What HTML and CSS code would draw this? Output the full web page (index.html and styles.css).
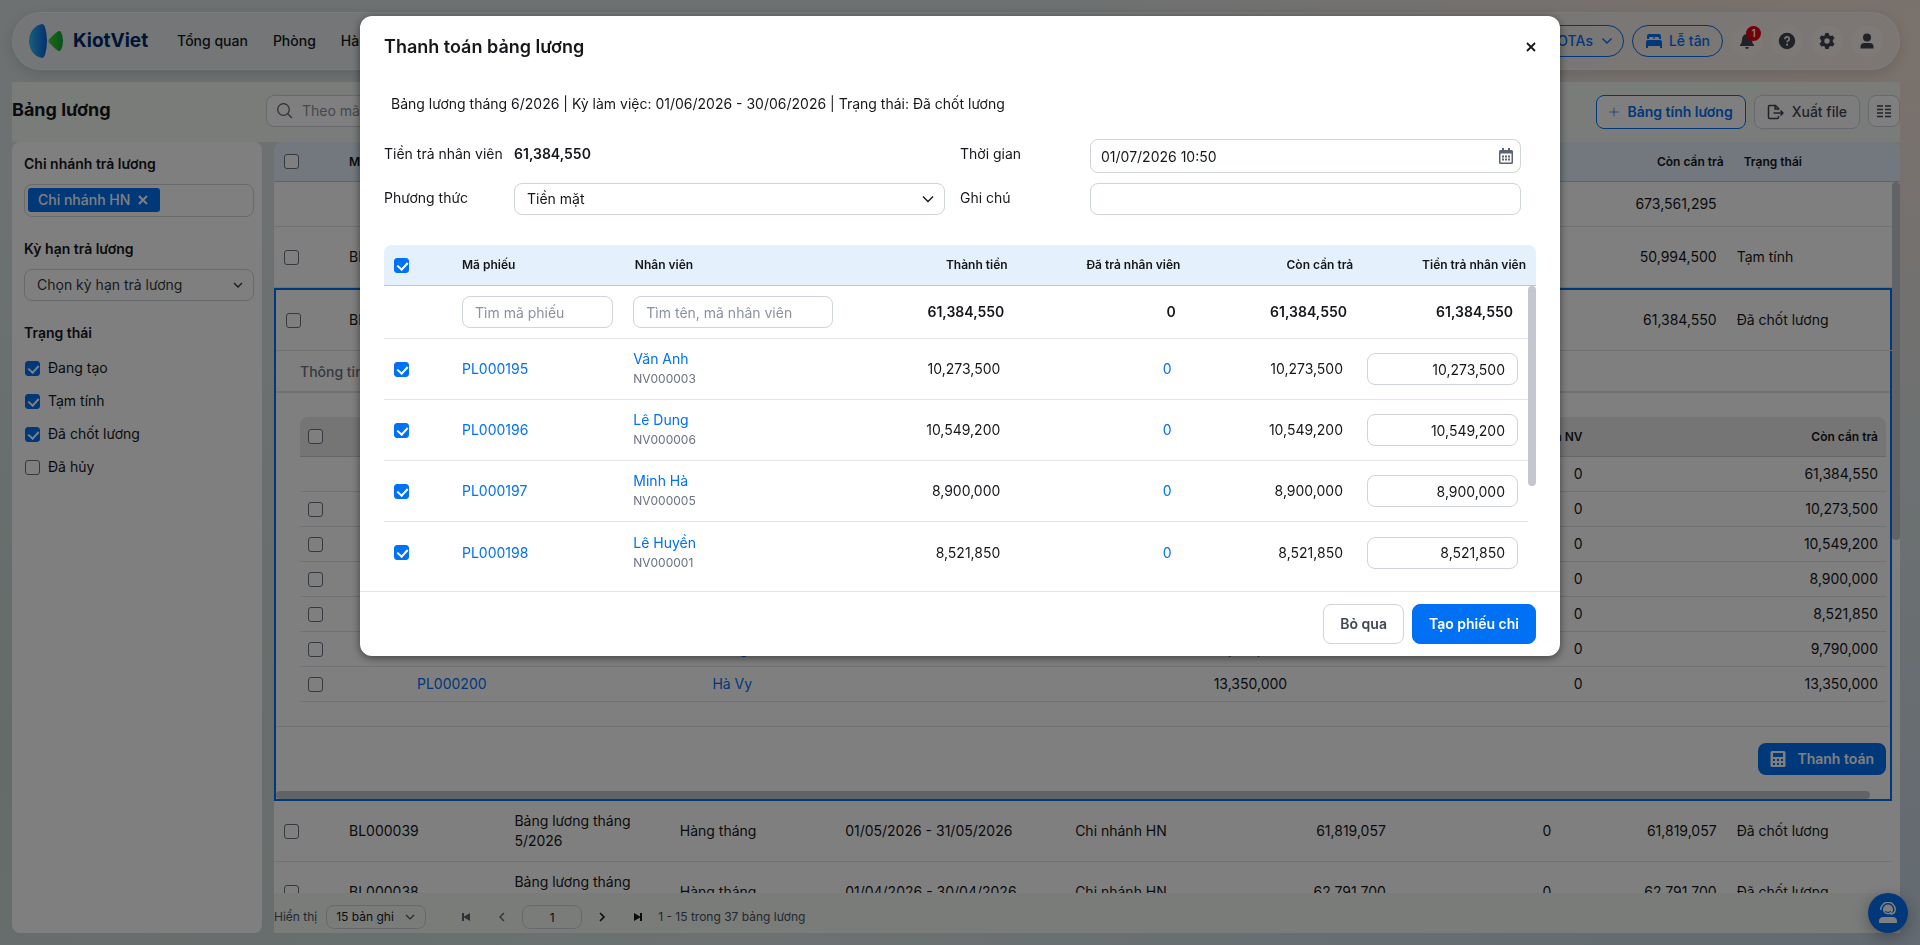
FILE: index.html
```html
<!DOCTYPE html>
<html lang="vi">
<head>
    <meta charset="UTF-8">
    <meta name="viewport" content="width=device-width, initial-scale=1.0">
    <title>Bảng lương - KiotViet</title>
    <link rel="stylesheet" href="styles.css">
</head>
<body>
    <header class="topbar">
        <a href="#" class="logo">
            <svg width="35" height="34" viewBox="0 0 35 34">
                <defs>
                    <linearGradient id="lg-blue" x1="0" x2="1"><stop offset="0" stop-color="#2ec0f5"/><stop offset="1" stop-color="#0a5fe0"/></linearGradient>
                    <linearGradient id="lg-green" x1="0" x2="1"><stop offset="0" stop-color="#48d02a"/><stop offset="1" stop-color="#0aa53a"/></linearGradient>
                </defs>
                <path d="M13 0C6 1 0 8 0 17s6 16 13 17q2 0 3-3 2-7 2-14T16 3q-1-3-3-3z" fill="url(#lg-blue)"/>
                <path d="M20 15.500Q26 9 29 7.300q2-1 3 0.700 2 4 2 9t-2 9q-1 1.700-3 0.700Q26 25 20 18.500q-1.300-1.500 0-3z" fill="url(#lg-green)"/>
            </svg>
            <span>KiotViet</span>
        </a>
        <nav class="main-nav">
            <a href="#">Tổng quan</a>
            <a href="#">Phòng</a>
            <a href="#">Hàng</a>
        </nav>
        <div class="top-actions">
            <button class="pill">OTAs
                <svg width="12" height="12" viewBox="0 0 12 12"><path d="M1.500 3.500L6 8l4.500-4.500" fill="none" stroke="currentColor" stroke-width="1.400"/></svg>
            </button>
            <button class="pill">
                <svg width="18" height="16" viewBox="0 0 18 16"><path d="M2 6V3q0-2 2-2h10q2 0 2 2v3h-2V5q0-1-1-1h-2.500q-1 0-1 1v1h-1V5q0-1-1-1H5Q4 4 4 5v1zM1 15V9q0-2 2-2h12q2 0 2 2v6h-2v-2H3v2z" fill="currentColor"/></svg>
                Lễ tân
            </button>
            <button class="round" aria-label="Thông báo">
                <svg width="18" height="18" viewBox="0 0 18 18"><path d="M9 2q5 0.500 5 6 0 3 2 5v1H2v-1q2-2 2-5 0-5.500 5-6zM7 15h4q-0.500 2-2 2t-2-2z" fill="currentColor"/></svg>
                <span class="badge">1</span>
            </button>
            <button class="round" aria-label="Trợ giúp">
                <svg width="18" height="18" viewBox="0 0 18 18"><circle cx="9" cy="9" r="8.200" fill="currentColor"/><path d="M6.800 7.200Q7 4.900 9.100 4.900t2.200 2q0 1.100-1.200 1.800-1 0.600-1 1.600" fill="none" stroke="#f4efec" stroke-width="1.600"/><circle cx="9.100" cy="12.700" r="1.100" fill="#f4efec"/></svg>
            </button>
            <button class="round" aria-label="Thiết lập">
                <svg width="18" height="18" viewBox="0 0 18 18"><path d="M7.300 1h3.400l0.500 2.300 1.400 0.800 2.200-0.700 1.700 2.900-1.700 1.600v2.200l1.700 1.600-1.700 2.900-2.200-0.700-1.400 0.800-0.500 2.300H7.300l-0.500-2.300-1.400-0.800-2.200 0.700-1.700-2.900 1.700-1.600V7.900L1.500 6.300l1.700-2.900 2.200 0.700 1.400-0.800zM9 6.300a2.700 2.700 0 100 5.400 2.700 2.700 0 000-5.400z" fill="currentColor" fill-rule="evenodd"/></svg>
            </button>
            <button class="round" aria-label="Tài khoản">
                <svg width="18" height="18" viewBox="0 0 18 18"><circle cx="9" cy="5.500" r="4" fill="currentColor"/><path d="M2.500 16.500v-1.500q0-4 4-4h5q4 0 4 4v1.500z" fill="currentColor"/></svg>
            </button>
        </div>
    </header>

    <main class="page">
        <div class="toolbar">
            <h1>Bảng lương</h1>
            <label class="search">
                <svg width="18" height="18" viewBox="0 0 18 18"><circle cx="7.500" cy="7.500" r="5.800" fill="none" stroke="currentColor" stroke-width="1.300"/><path d="M11.700 11.700L16 16" stroke="currentColor" stroke-width="1.300"/></svg>
                <input type="text" placeholder="Theo mã, tên" aria-label="Tìm bảng lương">
            </label>
            <div class="tools">
                <button class="btn btn-outline">
                    <svg width="10" height="10" viewBox="0 0 10 10"><path d="M5 0.500v9M0.500 5h9" stroke="currentColor" stroke-width="0.700"/></svg>
                    Bảng tính lương
                </button>
                <button class="btn btn-export">
                    <svg width="17" height="16" viewBox="0 0 17 16"><path d="M11.500 6V4.500L8.500 1.500H2.500q-1 0-1 1v11q0 1 1 1h8q1 0 1-1V12M8 1.500V5h3.500M6.500 9H16M13.500 6.500L16 9l-2.500 2.500" fill="none" stroke="currentColor" stroke-width="1.500"/></svg>
                    Xuất file
                </button>
                <button class="btn btn-cols" aria-label="Chọn cột hiển thị">
                    <svg width="16" height="14" viewBox="0 0 16 14"><path d="M1 2h6M9 2h6M1 5.500h6M9 5.500h6M1 9h6M9 9h6M1 12.500h6M9 12.500h6" stroke="currentColor" stroke-width="1.300"/></svg>
                </button>
            </div>
        </div>

        <div class="columns">
            <!-- Bộ lọc -->
            <aside class="filters">
                <h2>Chi nhánh trả lương</h2>
                <div class="tag-box">
                    <span class="tag">Chi nhánh HN
                        <button aria-label="Bỏ chi nhánh"><svg width="10" height="10" viewBox="0 0 10 10"><path d="M1 1l8 8M9 1L1 9" stroke="currentColor" stroke-width="2"/></svg></button>
                    </span>
                </div>
                <h2>Kỳ hạn trả lương</h2>
                <div class="select">
                    <select aria-label="Kỳ hạn trả lương"><option>Chọn kỳ hạn trả lương</option></select>
                    <svg width="10" height="10" viewBox="0 0 10 10"><path d="M1 3l4 4 4-4" fill="none" stroke="currentColor" stroke-width="1.400"/></svg>
                </div>
                <h2>Trạng thái</h2>
                <label class="check"><input type="checkbox" checked>Đang tạo</label>
                <label class="check"><input type="checkbox" checked>Tạm tính</label>
                <label class="check"><input type="checkbox" checked>Đã chốt lương</label>
                <label class="check"><input type="checkbox">Đã hủy</label>
            </aside>

            <!-- Danh sách bảng lương -->
            <section class="list">
                <table class="grid grid-head">
                    <colgroup><col class="c-check"><col><col><col><col class="c-period"><col><col><col><col><col></colgroup>
                    <thead>
                        <tr>
                            <th><input type="checkbox" aria-label="Chọn tất cả"></th>
                            <th>Mã</th><th></th><th></th><th></th><th></th>
                            <th></th><th></th><th class="num">Còn cần trả</th><th>Trạng thái</th>
                        </tr>
                    </thead>
                </table>
                <div class="list-body">
                    <div class="list-rows">
                        <table class="grid">
                            <colgroup><col class="c-check"><col><col><col><col class="c-period"><col><col><col><col><col></colgroup>
                            <tbody>
                                <tr class="sum"><td></td><td></td><td></td><td></td><td></td><td></td><td></td><td></td><td class="num">673,561,295</td><td></td></tr>
                                <tr><td><input type="checkbox" aria-label="BL000041"></td><td>BL000041</td><td></td><td></td><td></td><td></td><td></td><td></td><td class="num">50,994,500</td><td>Tạm tính</td></tr>
                            </tbody>
                        </table>

                        <div class="expanded">
                            <table class="grid">
                                <colgroup><col class="c-check"><col><col><col><col class="c-period"><col><col><col><col><col></colgroup>
                                <tbody>
                                    <tr><td><input type="checkbox" aria-label="BL000040"></td><td>BL000040</td><td></td><td></td><td></td><td></td><td></td><td></td><td class="num">61,384,550</td><td>Đã chốt lương</td></tr>
                                </tbody>
                            </table>
                            <div class="tabs"><a href="#">Thông tin</a></div>
                            <div class="slips">
                                <table>
                                    <colgroup><col class="c-slip"><col><col><col><col><col></colgroup>
                                    <thead>
                                        <tr><th><input type="checkbox" aria-label="Chọn tất cả phiếu"></th><th></th><th></th><th></th><th class="num">Đã trả NV</th><th class="num">Còn cần trả</th></tr>
                                    </thead>
                                    <tbody>
                                        <tr><td></td><td></td><td></td><td></td><td class="num">0</td><td class="num">61,384,550</td></tr>
                                        <tr><td><input type="checkbox" aria-label="PL000195"></td><td></td><td></td><td></td><td class="num">0</td><td class="num">10,273,500</td></tr>
                                        <tr><td><input type="checkbox" aria-label="PL000196"></td><td></td><td></td><td></td><td class="num">0</td><td class="num">10,549,200</td></tr>
                                        <tr><td><input type="checkbox" aria-label="PL000197"></td><td></td><td></td><td></td><td class="num">0</td><td class="num">8,900,000</td></tr>
                                        <tr><td><input type="checkbox" aria-label="PL000198"></td><td></td><td></td><td></td><td class="num">0</td><td class="num">8,521,850</td></tr>
                                        <tr><td><input type="checkbox" aria-label="PL000199"></td><td><a href="#">PL000199</a></td><td><a href="#">Hồng</a></td><td class="num">9,790,000</td><td class="num">0</td><td class="num">9,790,000</td></tr>
                                        <tr><td><input type="checkbox" aria-label="PL000200"></td><td><a href="#">PL000200</a></td><td><a href="#">Hà Vy</a></td><td class="num">13,350,000</td><td class="num">0</td><td class="num">13,350,000</td></tr>
                                    </tbody>
                                </table>
                            </div>
                            <div class="slip-actions">
                                <button class="btn btn-pay">
                                    <svg width="16" height="18" viewBox="0 0 16 18"><path d="M2 1h12q1.500 0 1.500 1.500v13q0 1.500-1.500 1.500H2Q0.500 17 0.500 15.500v-13Q0.500 1 2 1zM3 3v4h10V3zM3 9v2h2V9zM7 9v2h2V9zM11 9v2h2V9zM3 13v2h2v-2zM7 13v2h2v-2zM11 13v2h2v-2z" fill="currentColor" fill-rule="evenodd"/></svg>
                                    Thanh toán
                                </button>
                            </div>
                            <div class="scroll-x"></div>
                        </div>

                        <table class="grid">
                            <colgroup><col class="c-check"><col><col><col><col class="c-period"><col><col><col><col><col></colgroup>
                            <tbody>
                                <tr><td><input type="checkbox" aria-label="BL000039"></td><td>BL000039</td><td>Bảng lương tháng 5/2026</td><td>Hàng tháng</td><td>01/05/2026 - 31/05/2026</td><td>Chi nhánh HN</td><td class="num">61,819,057</td><td class="num">0</td><td class="num">61,819,057</td><td>Đã chốt lương</td></tr>
                                <tr><td><input type="checkbox" aria-label="BL000038"></td><td>BL000038</td><td>Bảng lương tháng 4/2026</td><td>Hàng tháng</td><td>01/04/2026 - 30/04/2026</td><td>Chi nhánh HN</td><td class="num">62,791,700</td><td class="num">0</td><td class="num">62,791,700</td><td>Đã chốt lương</td></tr>
                            </tbody>
                        </table>
                    </div>
                    <div class="scroll-y"></div>
                </div>
                <footer class="pager">
                    <label for="page-size">Hiển thị</label>
                    <div class="select select-small">
                        <select id="page-size"><option>15 bản ghi</option></select>
                        <svg width="10" height="10" viewBox="0 0 10 10"><path d="M1 3l4 4 4-4" fill="none" stroke="currentColor" stroke-width="1.200"/></svg>
                    </div>
                    <button class="off" aria-label="Trang đầu"><svg width="10" height="10" viewBox="0 0 10 10"><path d="M1 1h2v3.500L9 1v8L3 5.500V9H1z" fill="currentColor"/></svg></button>
                    <button class="off" aria-label="Trang trước"><svg width="10" height="10" viewBox="0 0 10 10"><path d="M7 1L3 5l4 4" fill="none" stroke="currentColor" stroke-width="1.300"/></svg></button>
                    <input type="text" value="1" aria-label="Trang">
                    <button aria-label="Trang sau"><svg width="10" height="10" viewBox="0 0 10 10"><path d="M3 1l4 4-4 4" fill="none" stroke="currentColor" stroke-width="1.600"/></svg></button>
                    <button aria-label="Trang cuối"><svg width="10" height="10" viewBox="0 0 10 10"><path d="M1 1l6 3.500V1h2v8H7V5.500L1 9z" fill="currentColor"/></svg></button>
                    <span>1 - 15 trong 37 bảng lương</span>
                </footer>
            </section>
        </div>
    </main>

    <button class="support" aria-label="Hỗ trợ">
        <svg width="20" height="22" viewBox="0 0 20 22"><circle cx="10" cy="7.500" r="5" fill="currentColor"/><path d="M2.800 8V7.500a7.200 7.200 0 0114.400 0q0 4.500-5.200 4.500" fill="none" stroke="currentColor" stroke-width="1.500"/><path d="M7 9.500q3 2 6 0" fill="none" stroke="#0070f4"/><path d="M1 21v-1.500q0-4.500 4.500-4.500h9q4.500 0 4.500 4.500V21z" fill="currentColor"/></svg>
    </button>

    <!-- Popup thanh toán -->
    <div class="overlay">
        <div class="modal" role="dialog" aria-labelledby="modal-title">
            <div class="modal-head">
                <h2 id="modal-title">Thanh toán bảng lương</h2>
                <button class="close" aria-label="Đóng"><svg width="10" height="10" viewBox="0 0 10 10"><path d="M1 1l8 8M9 1L1 9" stroke="currentColor" stroke-width="1.800"/></svg></button>
            </div>
            <p class="info">Bảng lương tháng 6/2026 | Kỳ làm việc: 01/06/2026 - 30/06/2026 | Trạng thái: Đã chốt lương</p>
            <form class="pay-form">
                <span class="label">Tiền trả nhân viên</span>
                <strong>61,384,550</strong>
                <label class="label label-right" for="pay-time">Thời gian</label>
                <div class="field date">
                    <input type="text" id="pay-time" value="01/07/2026 10:50">
                    <svg width="14" height="16" viewBox="0 0 14 16"><path d="M3 0h2v2h4V0h2v2h1.500Q14 2 14 3.500v11q0 1.500-1.500 1.500h-11Q0 16 0 14.500v-11Q0 2 1.500 2H3zM1.500 5.500v9h11v-9z" fill="currentColor" fill-rule="evenodd"/><path d="M3 8.500h2M6 8.500h2M9 8.500h2M3 11.500h2M6 11.500h2M9 11.500h2" stroke="currentColor" stroke-width="2"/></svg>
                </div>
                <label class="label" for="pay-method">Phương thức</label>
                <div class="select">
                    <select id="pay-method"><option>Tiền mặt</option></select>
                    <svg width="12" height="12" viewBox="0 0 12 12"><path d="M1 3.500l5 5 5-5" fill="none" stroke="currentColor" stroke-width="1.400"/></svg>
                </div>
                <label class="label label-right" for="pay-note">Ghi chú</label>
                <input type="text" id="pay-note" class="field">
            </form>

            <div class="pay-grid">
                <table class="pay-head">
                    <colgroup><col class="p-check"><col><col class="p-name"><col><col><col><col></colgroup>
                    <thead>
                        <tr><th><input type="checkbox" checked aria-label="Chọn tất cả"></th><th>Mã phiếu</th><th>Nhân viên</th><th class="num">Thành tiền</th><th class="num">Đã trả nhân viên</th><th class="num">Còn cần trả</th><th class="num">Tiền trả nhân viên</th></tr>
                    </thead>
                </table>
                <div class="pay-body">
                    <table>
                        <colgroup><col class="p-check"><col><col class="p-name"><col class="p-total"><col><col><col class="p-pay"></colgroup>
                        <tbody>
                            <tr class="sum"><td></td><td><input type="text" placeholder="Tìm mã phiếu" aria-label="Tìm mã phiếu"></td><td><input type="text" placeholder="Tìm tên, mã nhân viên" aria-label="Tìm nhân viên"></td><td class="num">61,384,550</td><td class="num">0</td><td class="num">61,384,550</td><td class="num">61,384,550</td></tr>
                            <tr><td><input type="checkbox" checked aria-label="PL000195"></td><td><a href="#">PL000195</a></td><td><a href="#">Văn Anh</a><small>NV000003</small></td><td class="num">10,273,500</td><td class="num"><a href="#">0</a></td><td class="num">10,273,500</td><td><input type="text" value="10,273,500" aria-label="Tiền trả PL000195"></td></tr>
                            <tr><td><input type="checkbox" checked aria-label="PL000196"></td><td><a href="#">PL000196</a></td><td><a href="#">Lê Dung</a><small>NV000006</small></td><td class="num">10,549,200</td><td class="num"><a href="#">0</a></td><td class="num">10,549,200</td><td><input type="text" value="10,549,200" aria-label="Tiền trả PL000196"></td></tr>
                            <tr><td><input type="checkbox" checked aria-label="PL000197"></td><td><a href="#">PL000197</a></td><td><a href="#">Minh Hà</a><small>NV000005</small></td><td class="num">8,900,000</td><td class="num"><a href="#">0</a></td><td class="num">8,900,000</td><td><input type="text" value="8,900,000" aria-label="Tiền trả PL000197"></td></tr>
                            <tr><td><input type="checkbox" checked aria-label="PL000198"></td><td><a href="#">PL000198</a></td><td><a href="#">Lê Huyền</a><small>NV000001</small></td><td class="num">8,521,850</td><td class="num"><a href="#">0</a></td><td class="num">8,521,850</td><td><input type="text" value="8,521,850" aria-label="Tiền trả PL000198"></td></tr>
                        </tbody>
                    </table>
                    <div class="scroll-y"></div>
                </div>
            </div>

            <div class="modal-foot">
                <button class="btn btn-cancel">Bỏ qua</button>
                <button class="btn btn-create">Tạo phiếu chi</button>
            </div>
        </div>
    </div>
</body>
</html>
```

FILE: styles.css
```css
* {
    box-sizing: border-box;
}
body {
    margin: 0;
    height: 100vh;
    padding: 12px 20px 12px 12px;
    display: flex;
    flex-direction: column;
    gap: 12px;
    overflow: hidden;
    font-family: Inter, "Liberation Sans", sans-serif;
    font-size: 14px;
    line-height: 20px;
    color: #15171a;
    background:
        radial-gradient(50% 45% at 100% 5%, #f6e4d8 0, rgba(246,228,216,0) 100%),
        radial-gradient(40% 60% at 0 80%, #c8d8d3 0, rgba(200,216,211,0) 100%),
        radial-gradient(60% 50% at 100% 100%, #c6d4e2 0, rgba(198,212,226,0) 100%),
        #dae2e4;
}
h1, h2, p {
    margin: 0;
}
a {
    color: #0070f4;
    text-decoration: none;
}
button, input, select {
    font: inherit;
    color: inherit;
}
button {
    display: flex;
    align-items: center;
    justify-content: center;
    padding: 0;
    border: none;
    background: none;
    cursor: pointer;
}
svg {
    flex: none;
    display: block;
}
input::placeholder {
    color: #8a929e;
    opacity: 1;
}
input[type="checkbox"] {
    appearance: none;
    display: block;
    position: relative;
    flex: none;
    width: 15px;
    height: 15px;
    margin: 0;
    border: 1px solid #6b7280;
    border-radius: 3px;
    background: #fff;
}
input[type="checkbox"]:checked {
    border-color: #0070f4;
    background: #0070f4;
}
input[type="checkbox"]:checked::after {
    content: "";
    position: absolute;
    left: 4px;
    top: 1px;
    width: 5px;
    height: 8px;
    border: solid #fff;
    border-width: 0 2px 2px 0;
    transform: rotate(42deg);
}
table {
    width: 100%;
    table-layout: fixed;
    border-collapse: separate;
    border-spacing: 0;
}
th {
    text-align: left;
    font-size: 12px;
    font-weight: 600;
    white-space: nowrap;
}
.num {
    text-align: right;
}

/* Thanh trên cùng */
.topbar {
    flex: none;
    display: flex;
    align-items: center;
    height: 58px;
    padding: 0 16px;
    border: 1px solid rgba(255,255,255,0.5);
    border-radius: 29px;
    background: rgba(255,255,255,0.4);
    box-shadow: 0 4px 14px rgba(0,0,0,0.12);
}
.logo {
    display: flex;
    align-items: center;
    gap: 9px;
    color: #00296b;
    font-size: 19px;
    font-weight: 700;
}
.main-nav {
    display: flex;
    gap: 25px;
    margin-left: 29px;
    font-weight: 500;
}
.main-nav a {
    color: #15171a;
}
.top-actions {
    display: flex;
    gap: 8px;
    margin-left: auto;
}
.pill {
    gap: 8px;
    height: 32px;
    padding: 0 12px;
    border: 1px solid #0070f4;
    border-radius: 16px;
    color: #0070f4;
    font-weight: 500;
}
.pill svg {
    margin: 0 -2px 0 0;
}
.round {
    position: relative;
    width: 32px;
    height: 32px;
    border-radius: 50%;
    background: rgba(255,255,255,0.3);
    color: #3f4652;
}
.badge {
    position: absolute;
    top: 1px;
    right: 2px;
    width: 15px;
    height: 15px;
    border-radius: 50%;
    background: #e60012;
    color: #fff;
    font-size: 10px;
    font-weight: 600;
    line-height: 15px;
}

/* Trang */
.page {
    flex: 1;
    min-height: 0;
    display: flex;
    flex-direction: column;
}
.toolbar {
    flex: none;
    display: flex;
    align-items: flex-start;
    height: 60px;
    padding-top: 13px;
    background: #f4f8f5;
}
.toolbar h1 {
    width: 254px;
    font-size: 18px;
    line-height: 30px;
    font-weight: 700;
}
.search {
    display: flex;
    align-items: center;
    gap: 6px;
    width: 420px;
    height: 32px;
    padding: 0 9px;
    border: 1px solid #cfd3da;
    border-radius: 8px;
    background: #fff;
    color: #5b6370;
}
.search input {
    width: 100%;
    border: none;
    outline: none;
    background: none;
}
.tools {
    display: flex;
    align-items: flex-start;
    gap: 8px;
    margin-left: auto;
}
.btn {
    height: 34px;
    gap: 8px;
    padding: 0 12px;
    border: 1px solid #cfd3da;
    border-radius: 8px;
    font-weight: 600;
    color: #3f4652;
    white-space: nowrap;
}
.btn-outline {
    border-color: #0070f4;
    background: #fff;
    color: #0070f4;
}
.btn-export {
    background: #fbfbfb;
    font-weight: 500;
}
.btn-cols {
    width: 32px;
    height: 32px;
    padding: 0;
    background: #fff;
}
.columns {
    flex: 1;
    min-height: 0;
    display: flex;
    gap: 12px;
}
.filters {
    flex: none;
    width: 250px;
    padding: 12px 8px 0 12px;
    border-radius: 8px;
    background: #fff;
}
.filters h2 {
    margin-bottom: 10px;
    font-size: 14px;
    font-weight: 600;
}
.tag-box {
    display: flex;
    height: 33px;
    margin-bottom: 22px;
    padding: 3px;
    border: 1px solid #cfd3da;
    border-radius: 8px;
}
.tag {
    display: flex;
    align-items: center;
    gap: 8px;
    height: 24px;
    padding: 0 12px 0 10px;
    border-radius: 3px;
    background: #0070f4;
    color: #fff;
    font-weight: 500;
}
.select {
    display: flex;
    align-items: center;
    position: relative;
}
.select select {
    appearance: none;
    width: 100%;
    height: 32px;
    padding: 0 12px;
    border: 1px solid #cfd3da;
    border-radius: 8px;
    background: #fff;
}
.select svg {
    position: absolute;
    right: 11px;
    pointer-events: none;
}
.filters .select {
    margin-bottom: 22px;
    color: #33383f;
}
.check {
    display: flex;
    align-items: center;
    gap: 8px;
    margin-bottom: 13px;
    padding-left: 1px;
}
.filters h2:last-of-type {
    margin-bottom: 15px;
}

/* Bảng chính */
.list {
    flex: 1;
    min-width: 0;
    display: flex;
    flex-direction: column;
}
.c-check {
    width: 65px;
}
.expanded .c-check {
    width: 63px;
}
.expanded .grid {
    width: calc(100% + 2px);
}
.c-period {
    width: 230px;
}
.grid td, .grid th {
    height: 61px;
    padding: 0 10px;
    border-bottom: 1px solid #e3e5e8;
}
.grid th {
    height: 40px;
    border-bottom-color: #a6ccfa;
    background: #e4f0fc;
}
.grid-head {
    flex: none;
}
.grid-head th:first-child {
    border-radius: 8px 0 0 0;
}
.grid-head th:last-child {
    border-radius: 0 8px 0 0;
}
.grid .sum td {
    height: 45px;
}
.list-body {
    position: relative;
    flex: 1;
    min-height: 0;
    padding-right: 8px;
    overflow: hidden;
    background: #fff;
}
.scroll-y {
    position: absolute;
    top: 0;
    right: 0;
    width: 8px;
    height: 358px;
    border-radius: 4px;
    background: #c4c7cf;
}
.expanded {
    border: 2px solid #0070f4;
}
.tabs {
    height: 42px;
    padding: 11px 24px 0;
    border-bottom: 2px solid #e3e5e8;
}
.tabs a {
    color: #6b7280;
    font-weight: 500;
}
.slips {
    padding: 24px 4px 24px 24px;
    border-bottom: 1px solid #e3e5e8;
}
.c-slip {
    width: 109px;
}
.slips td, .slips th {
    height: 35px;
    padding: 0 8px;
    border-bottom: 1px solid #e3e5e8;
}
.slips th {
    height: 40px;
    border-bottom-color: #cccfd4;
    background: #ebebeb;
}
.slips th:first-child {
    border-radius: 8px 0 0 0;
}
.slips th:last-child {
    border-radius: 0 8px 0 0;
}
.slip-actions {
    display: flex;
    justify-content: flex-end;
    padding: 16px 4px;
}
.btn-pay {
    height: 32px;
    gap: 11px;
    border: none;
    background: #0070f4;
    color: #fff;
}
.scroll-x {
    width: calc(100% - 20px);
    height: 8px;
    border-radius: 4px;
    background: #c4c7cf;
}
.pager {
    flex: none;
    display: flex;
    align-items: center;
    height: 40px;
    padding-top: 8px;
    background: #f4f8f5;
    font-size: 12px;
    color: #4a505a;
}
.pager label {
    margin-right: 9px;
}
.select-small {
    width: 100px;
    margin-right: 34px;
}
.select-small select {
    height: 24px;
    padding: 0 9px;
    background: none;
    color: #15171a;
}
.pager button {
    width: 12px;
    height: 24px;
    margin-right: 24px;
    color: #15171a;
}
.pager button.off {
    color: #5b6370;
}
.pager .off + .off {
    margin-right: 14px;
}
.pager input {
    width: 60px;
    height: 24px;
    margin-right: 14px;
    border: 1px solid #cfd3da;
    border-radius: 8px;
    background: none;
    text-align: center;
    color: #15171a;
}
.pager button:last-of-type {
    margin-right: 14px;
}
.support {
    position: fixed;
    right: 12px;
    bottom: 12px;
    width: 40px;
    height: 40px;
    border-radius: 50%;
    background: #0070f4;
    color: #fff;
    box-shadow: 0 4px 16px rgba(0,0,0,0.3);
}

/* Popup */
.overlay {
    position: fixed;
    inset: 0;
    padding: 16px;
    background: rgba(0,0,0,0.5);
}
.modal {
    max-width: 1200px;
    margin: 0 auto;
    border-radius: 12px;
    background: #fff;
    box-shadow: 0 2px 8px rgba(0,0,0,0.5);
}
.modal-head {
    display: flex;
    align-items: center;
    justify-content: space-between;
    padding: 18px 24px 17px;
}
.modal-head h2 {
    font-size: 18px;
    line-height: 26px;
    font-weight: 600;
}
.close {
    width: 10px;
    height: 26px;
}
.info {
    padding: 17px 31px 25px;
}
.pay-form {
    display: grid;
    grid-template-columns: 122px 1fr 129px 1fr;
    column-gap: 8px;
    row-gap: 10px;
    align-items: start;
    padding: 0 39px 0 24px;
}
.pay-form strong {
    font-weight: 600;
}
.pay-form .label, .pay-form strong {
    padding-top: 5px;
}
.pay-form .label-right {
    padding-left: 7px;
}
.field, .field input, .pay-body input[type="text"] {
    width: 100%;
    height: 32px;
    padding: 0 10px;
    border: 1px solid #cfd3da;
    border-radius: 8px;
    background: #fff;
}
.date {
    display: flex;
    align-items: center;
    height: 34px;
    padding: 0 7px 0 0;
    color: #5b6370;
}
.date input {
    border: none;
    color: #15171a;
}
.pay-grid {
    padding: 30px 24px 0;
}
.p-check {
    width: 68px;
}
.p-name {
    width: 220px;
}
.p-total {
    width: 167px;
}
.p-pay {
    width: 175px;
}
.pay-grid td, .pay-grid th {
    height: 61px;
    padding: 0 10px;
    border-bottom: 1px solid #e3e5e8;
}
.pay-grid th {
    height: 41px;
    border-bottom-color: #a6ccfa;
    background: #e4f0fc;
}
.pay-head th:first-child {
    border-radius: 8px 0 0 0;
}
.pay-head th:last-child {
    border-radius: 0 8px 0 0;
}
.pay-body {
    position: relative;
    padding-right: 8px;
}
.pay-body .scroll-y {
    height: 200px;
}
.pay-body .sum td {
    height: 53px;
    font-weight: 600;
}
.pay-body .sum .num {
    padding-right: 6px;
}
.pay-body .sum .num:last-child {
    padding-right: 15px;
}
.pay-body .sum input {
    font-weight: 400;
    padding: 0 12px;
}
.pay-body td:last-child {
    padding-left: 14px;
}
.pay-body td:last-child input {
    padding: 0 12px;
    text-align: right;
}
.pay-body a, .pay-body small {
    display: block;
}
.pay-body small {
    font-size: 12px;
    color: #6b7280;
}
.pay-body tr:last-child td {
    border-bottom: none;
}
.modal-foot {
    display: flex;
    justify-content: flex-end;
    gap: 8px;
    margin-top: 8px;
    padding: 12px 24px;
    border-top: 1px solid #e3e5e8;
}
.modal-foot .btn {
    height: 40px;
    padding: 0 16px;
}
.modal-foot .btn-create {
    border-color: #0070f4;
    background: #0070f4;
    color: #fff;
}
```
